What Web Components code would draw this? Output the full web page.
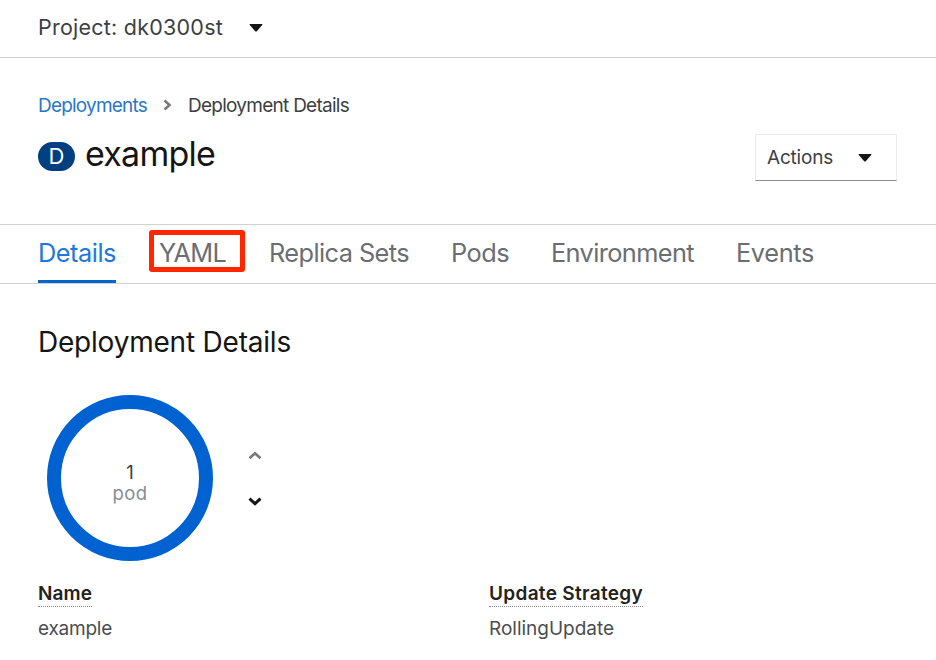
<!DOCTYPE html>
<html lang="en"><head><meta charset="utf-8"><title>Deployment Details</title>
<style>
html,body{margin:0;background:#fff}
body{width:936px;height:660px;overflow:hidden;font-family:Inter,"Open Sans",sans-serif;color:#151515}
</style></head><body>
<deployment-page></deployment-page>
<script>
// Text run whose tracking is adjusted so that it fills the given width.
class FitText extends HTMLElement {
  connectedCallback() {
    const root = this.attachShadow({mode: 'open'});
    root.innerHTML = `<style>:host{display:block;flex:none;white-space:nowrap;font-size:${this.getAttribute('size')}px;width:${this.getAttribute('w')}px}span{display:inline-block}</style><span><slot></slot></span>`;
    const run = root.querySelector('span');
    const gap = (Number(this.getAttribute('w')) - run.getBoundingClientRect().width) / this.textContent.length;
    run.style.letterSpacing = gap.toFixed(3) + 'px';
  }
}
customElements.define('fit-text', FitText);

class UiIcon extends HTMLElement {
  connectedCallback() {
    const shapes = {
      caret: ['14', '8', '<path d="M1.1 0H12.9Q14 0 13.2 .9L7.8 7.2Q7 8 6.2 7.2L.8 .9Q0 0 1.1 0Z" fill="currentColor"/>'],
      right: ['9', '12', '<path d="M1.5 1.5L6.5 6L1.5 10.5" fill="none" stroke="currentColor" stroke-width="2.6"/>'],
      up: ['14', '9', '<path d="M1.5 7.3L7 2.3L12.5 7.3" fill="none" stroke="currentColor" stroke-width="2.7"/>'],
      down: ['14', '9', '<path d="M1.5 1.7L7 6.7L12.5 1.7" fill="none" stroke="currentColor" stroke-width="3"/>']
    };
    const [w, h, body] = shapes[this.getAttribute('name')];
    this.attachShadow({mode: 'open'}).innerHTML = `<style>:host{display:block;flex:none}svg{display:block}</style><svg width="${w}" height="${h}" viewBox="0 0 ${w} ${h}">${body}</svg>`;
  }
}
customElements.define('ui-icon', UiIcon);

class ProjectBar extends HTMLElement {
  connectedCallback() {
    this.attachShadow({mode: 'open'}).innerHTML = `<style>:host{display:flex;box-sizing:border-box;height:58px;padding:0 0 3px 38px;align-items:center;gap:26px;border-bottom:1.5px solid #d2d2d2;color:#3c3f42}ui-icon{color:#151515;margin-top:1px}</style><slot></slot><ui-icon name="caret"></ui-icon>`;
  }
}
customElements.define('project-bar', ProjectBar);

class PageHeader extends HTMLElement {
  connectedCallback() {
    this.attachShadow({mode: 'open'}).innerHTML = `<style>
:host{display:block;box-sizing:border-box;height:166px;padding:35px 39px 0 38px}
nav{display:flex;align-items:center;height:24px;color:#3c3f42}
.link{color:#2b77c4}nav ui-icon{color:#77797c;margin:0 16px 0 16px}
.row{display:flex;justify-content:space-between;align-items:flex-start;margin-top:15px}
.title{display:flex;align-items:flex-start;gap:10px;line-height:43px}
.badge{display:flex;align-items:center;justify-content:center;width:37px;height:29px;border-radius:15px;background:#004080;color:#fff;font-size:22px;line-height:29px;margin-top:10px}
.actions{display:flex;align-items:center;box-sizing:border-box;width:142px;height:47px;margin-top:2px;padding:0 0 1px 11px;gap:25px;border:1px solid #ededed;border-bottom:1.5px solid #8a8d90;color:#3c3f42}
.actions ui-icon{color:#151515;margin-top:1px}
</style><nav><fit-text class="link" size="19" w="109">Deployments</fit-text><ui-icon name="right"></ui-icon><fit-text size="19" w="161">Deployment Details</fit-text></nav>
<div class="row"><div class="title"><span class="badge">D</span><fit-text size="34" w="130">example</fit-text></div><div class="actions"><fit-text size="19" w="66">Actions</fit-text><ui-icon name="caret"></ui-icon></div></div>`;
  }
}
customElements.define('page-header', PageHeader);

class TabBar extends HTMLElement {
  connectedCallback() {
    this.attachShadow({mode: 'open'}).innerHTML = `<style>:host{display:flex;box-sizing:border-box;height:60px;padding-left:38px;border-top:1px solid #d2d2d2;border-bottom:1px solid #d2d2d2;line-height:55px;color:#6a6e73}</style><slot></slot>`;
  }
}
customElements.define('tab-bar', TabBar);

class TabItem extends HTMLElement {
  connectedCallback() {
    this.attachShadow({mode: 'open'}).innerHTML = `<style>
:host{display:block;position:relative;flex:none;height:58px}
:host([active]){color:#1f77dc;box-shadow:inset 0 -3px #06c}
:host([marked])::after{content:"";position:absolute;left:-10px;top:5px;width:96px;height:42px;box-sizing:border-box;border:5px solid #ff2600;border-radius:3px}
</style><slot></slot>`;
  }
}
customElements.define('tab-item', TabItem);

class PodRing extends HTMLElement {
  connectedCallback() {
    this.attachShadow({mode: 'open'}).innerHTML = `<style>
:host{display:flex;align-items:center;gap:33.5px;height:168px;padding-left:46px}
.ring{display:grid;width:168px;height:168px}.ring>*{grid-area:1/1}
.text{display:flex;flex-direction:column;align-items:center;padding-top:68px;line-height:21px;font-size:18.5px;color:#3c3f42}.text fit-text{color:#8a8d90}
.steps{display:flex;flex-direction:column;gap:37.5px;margin-top:2px;color:#151515}.steps :first-child{color:#77797c}
</style><div class="ring"><svg width="168" height="168"><circle cx="84" cy="84" r="76" fill="none" stroke="#0062d1" stroke-width="14"/></svg><div class="text"><span>1</span><fit-text size="18.5" w="35">pod</fit-text></div></div>
<div class="steps"><ui-icon name="up"></ui-icon><ui-icon name="down"></ui-icon></div>`;
  }
}
customElements.define('pod-ring', PodRing);

class DetailField extends HTMLElement {
  connectedCallback() {
    this.attachShadow({mode: 'open'}).innerHTML = `<style>
:host{display:flex;flex-direction:column;align-items:flex-start;color:#4a4d50;line-height:24px}
.label{height:24px;border-bottom:1.5px dotted #8a8d90;font-weight:600;color:#222}
.value{margin-top:10px}
</style><div class="label"><slot name="label"></slot></div><div class="value"><slot></slot></div>`;
  }
}
customElements.define('detail-field', DetailField);

class DeploymentPage extends HTMLElement {
  connectedCallback() {
    this.attachShadow({mode: 'open'}).innerHTML = `<style>
:host{display:block}
h2{margin:0;padding:39px 0 0 38px;font-weight:400;line-height:39px}
pod-ring{margin-top:31.5px}
.fields{display:grid;grid-template-columns:451px 1fr;padding:20px 0 0 38px}
.t2{margin-left:43px}.t3{margin-left:42px}
</style>
<project-bar><fit-text size="21.5" w="185">Project: dk0300st</fit-text></project-bar>
<page-header></page-header>
<tab-bar><tab-item active><fit-text size="25.3" w="78">Details</fit-text></tab-item><tab-item marked class="t2"><fit-text size="25.3" w="67">YAML</fit-text></tab-item><tab-item class="t2"><fit-text size="25.3" w="140">Replica Sets</fit-text></tab-item><tab-item class="t3"><fit-text size="25.3" w="58">Pods</fit-text></tab-item><tab-item class="t3"><fit-text size="25.3" w="143">Environment</fit-text></tab-item><tab-item class="t3"><fit-text size="25.3" w="78">Events</fit-text></tab-item></tab-bar>
<h2><fit-text size="28" w="253">Deployment Details</fit-text></h2>
<pod-ring></pod-ring>
<div class="fields"><detail-field><fit-text slot="label" size="19" w="54">Name</fit-text><fit-text size="19" w="74">example</fit-text></detail-field><detail-field><fit-text slot="label" size="19" w="154">Update Strategy</fit-text><fit-text size="19" w="125">RollingUpdate</fit-text></detail-field></div>`;
  }
}
customElements.define('deployment-page', DeploymentPage);
</script>
</body></html>
